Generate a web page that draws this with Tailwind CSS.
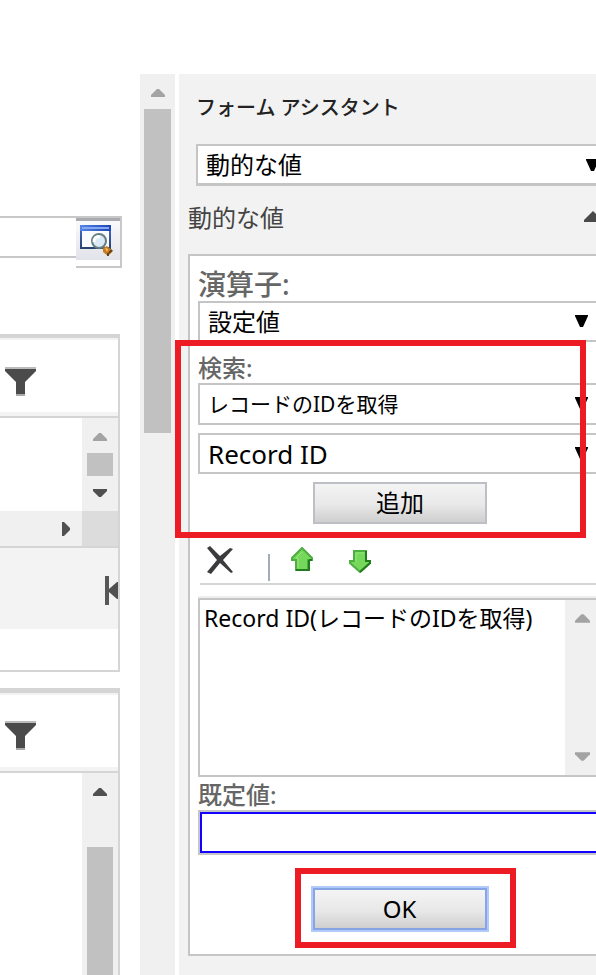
<!DOCTYPE html>
<html lang="ja">
<head>
<meta charset="utf-8">
<meta name="viewport" content="width=device-width, initial-scale=1">
<title>フォーム アシスタント</title>
<script src="https://cdn.jsdelivr.net/npm/@tailwindcss/browser@4"></script>
</head>
<body class="bg-white overflow-x-hidden font-['Noto_Sans','Noto_Sans_CJK_JP',sans-serif] text-black">
<svg class="hidden" aria-hidden="true">
  <symbol id="up" viewBox="0 0 14 8"><path d="M0 8V6L6 0H8L14 6V8Z" fill="currentColor"/></symbol>
  <symbol id="down" viewBox="0 0 14 8"><path d="M0 0V2L6 8H8L14 2V0Z" fill="currentColor"/></symbol>
  <symbol id="caret" viewBox="0 0 13 13"><path d="M0 0H13V1L8 12H5L0 1Z" fill="currentColor"/></symbol>
  <symbol id="funnel" viewBox="0 0 33 29"><path d="M1 2H32V4L21 15V28H12V15L1 4Z" fill="#4b4b4b"/><path d="M1 0H32V2H1Z" fill="#bcbcbc"/><path d="M12 27H21V29H12Z" fill="#aaa"/></symbol>
</svg>
<main class="flex min-h-screen">
  <section class="w-[140px] shrink-0 flex flex-col pt-[216px]" aria-label="レコード">
    <div class="flex items-start w-[122px]">
      <input type="text" aria-label="検索値" class="min-w-0 flex-1 h-[42px] border-y-2 border-[#c8c8c8] bg-white outline-none">
      <div class="w-[46px] h-[52px] border-y-2 border-r-2 border-[#c8c8c8]">
        <button type="button" aria-label="参照" class="block w-full h-[42px] border-t-3 border-[#a9abb1] bg-linear-to-b from-[#fafafb] to-[#e2e2ea] pl-1">
          <svg class="w-[34px] h-[32px]" viewBox="0 0 34 32" aria-hidden="true">
            <defs><linearGradient id="bar" x2="1"><stop stop-color="#5585e8"/><stop offset="1" stop-color="#1c45b4"/></linearGradient><linearGradient id="frame" y2="1" x2="0"><stop stop-color="#3f68c4"/><stop offset="1" stop-color="#29436f"/></linearGradient></defs>
            <path d="M1 5H30V23H1Z" fill="#fbfcff" stroke="url(#frame)" stroke-width="2"/>
            <path d="M0 0H31V6H0Z" fill="url(#bar)"/><path d="M2 2H29V4H2Z" fill="#84a8f4"/>
            <path d="M23 23L27 21L33 26L28 31L23 27Z" fill="#c77b20"/><path d="M25 23L28 24L27 27Z" fill="#ffc65e"/><path d="M29 28L32 25M28 31V28" stroke="#68401c" stroke-width="2"/>
            <circle cx="19" cy="16" r="7" fill="#dceaf6" stroke="#667d83" stroke-width="2"/><path d="M14 17Q14 11 20 12" fill="none" stroke="#fff" stroke-width="3"/>
          </svg>
        </button>
      </div>
    </div>

    <div class="mt-[66px] w-[120px] border-t-4 border-r-2 border-b-2 border-[#d5d5d5]">
      <div class="h-20 border-b-2 border-[#d5d5d5]">
        <div class="h-[78px] border-t-2 border-b-4 border-[#f3f3f3] pt-[27px] pl-1">
          <button type="button" aria-label="フィルター" class="block"><svg class="w-[33px] h-[29px]"><use href="#funnel"/></svg></button>
        </div>
      </div>
      <div class="flex justify-end h-[93px]">
        <div class="w-9 bg-[#f0f0f0] flex flex-col items-center pt-[15px]">
          <svg class="w-[14px] h-2 text-[#a3a3a3]"><use href="#up"/></svg>
          <div class="mt-3 w-[26px] h-[23px] bg-[#c1c1c1]"></div>
          <svg class="mt-[13px] w-[14px] h-2 text-[#505050]"><use href="#down"/></svg>
        </div>
      </div>
      <div class="flex h-[37px] border-b-2 border-[#d5d5d5]">
        <div class="flex-1 bg-[#f0f0f0] flex items-center justify-end pr-3">
          <svg class="w-2 h-[14px]" viewBox="0 0 8 14" aria-hidden="true"><path d="M0 0H2L8 6V8L2 14H0Z" fill="#505050"/></svg>
        </div>
        <div class="w-9 bg-[#dcdcdc]"></div>
      </div>
      <div class="h-[81px] bg-[#f3f3f3] flex items-center justify-end pt-1">
        <button type="button" aria-label="最初のページ"><svg class="block w-[13px] h-[29px]" viewBox="0 0 13 29"><path d="M0 0H4V29H0Z" fill="#575757"/><path d="M4 13L12 6H13V23H12L4 16Z" fill="#505050"/></svg></button>
      </div>
      <div class="h-[41px]"></div>
    </div>

    <div class="mt-4 w-[120px] flex-1 flex flex-col border-t-5 border-r-2 border-[#d5d5d5]">
      <div class="h-20 border-b-2 border-[#d5d5d5]">
        <div class="h-[78px] border-t-2 border-b-4 border-[#f3f3f3] pt-[26px] pl-1">
          <button type="button" aria-label="フィルター" class="block"><svg class="w-[33px] h-[29px]"><use href="#funnel"/></svg></button>
        </div>
      </div>
      <div class="flex-1 flex justify-end">
        <div class="w-9 bg-[#f0f0f0] flex flex-col items-center pt-[15px]">
          <svg class="w-[14px] h-2 shrink-0 text-[#505050]"><use href="#up"/></svg>
          <div class="mt-[51px] w-[26px] flex-1 bg-[#c1c1c1]"></div>
        </div>
      </div>
    </div>
  </section>

  <div class="mt-[74px] w-[35px] shrink-0 bg-[#f0f0f0] flex flex-col items-center pt-[15px]">
    <svg class="w-[14px] h-2 text-[#a3a3a3]"><use href="#up"/></svg>
    <div class="mt-3 w-[27px] h-[324px] bg-[#c1c1c1]"></div>
  </div>

  <aside class="mt-[74px] ml-1 flex-1 min-w-0 bg-[#f2f2f2] pb-5">
    <h1 class="pl-[17px] pt-[18px] h-[70px] text-[20px] leading-8 font-medium text-[#222]">フォーム アシスタント</h1>
    <div class="relative ml-[17px] overflow-hidden">
      <select aria-label="アシスタントの種類" class="block appearance-none w-full h-[42px] pl-2 bg-white border-2 border-b-3 border-r-0 border-[#c5c5c5] text-[24px] leading-8"><option>動的な値</option></select>
      <svg class="absolute -right-[3px] top-[15px] w-[13px] h-[13px] pointer-events-none"><use href="#caret"/></svg>
    </div>
    <div class="flex justify-between items-center h-[68px] pl-[9px] pb-1 overflow-hidden">
      <h2 class="text-[24px] leading-8 text-[#444]">動的な値</h2>
      <svg class="-mr-1.5 mb-1 w-[18px] h-[11px]" viewBox="0 0 18 11" aria-hidden="true"><path d="M0 11V9L9 0L18 9V11Z" fill="#4a4a4a"/></svg>
    </div>

    <form class="ml-[9px] bg-white border-2 border-r-0 border-[#c5c5c5] pl-2" onsubmit="return false">
      <label for="op" class="block h-[45px] pt-3 text-[28px] leading-8 font-medium text-[#666]">演算子:</label>
      <div class="relative">
        <select id="op" class="block appearance-none w-full h-[41px] pl-2 bg-white border-2 border-r-0 border-[#c5c5c5] text-[24px] leading-8"><option>設定値</option></select>
        <svg class="absolute right-2 top-[14px] w-[13px] h-[13px] pointer-events-none"><use href="#caret"/></svg>
      </div>

      <div class="relative">
        <label for="entity" class="block h-[41px] pt-2.5 text-[24px] leading-8 font-medium text-[#666]">検索:</label>
        <div class="relative">
          <select id="entity" class="block appearance-none w-full h-[42px] pl-2 bg-white border-2 border-r-0 border-[#c5c5c5] text-[21px] leading-8"><option>レコードのIDを取得</option></select>
          <svg class="absolute right-2 top-[14px] w-[13px] h-[13px] pointer-events-none"><use href="#caret"/></svg>
        </div>
        <div class="relative mt-2">
          <select aria-label="フィールド" class="block appearance-none w-full h-[41px] pl-2 bg-white border-2 border-r-0 border-[#c5c5c5] text-[26px] leading-8"><option>Record ID</option></select>
          <svg class="absolute right-2 top-[14px] w-[13px] h-[13px] pointer-events-none"><use href="#caret"/></svg>
        </div>
        <div class="flex justify-center pl-1.5 pt-2">
          <button type="button" class="w-[174px] h-[42px] border-2 border-[#bcc0c4] text-[24px] leading-8 bg-linear-to-b from-[#f4f4f4] from-0% via-[#e8e8e8] via-55% to-[#cfcfcf]">追加</button>
        </div>
        <div class="absolute -left-[23px] right-2.5 -top-0.5 -bottom-3.5 border-6 border-[#ed1c24] pointer-events-none"></div>
      </div>

      <div class="mt-[18px] h-[43px] ml-0.5 flex items-start border-b-2 border-[#d5d5d5]">
        <button type="button" aria-label="削除" class="ml-1.5 mt-1"><svg class="block w-[28px] h-[29px]" viewBox="0 0 28 29"><path d="M1 2L4 0L14 10L24 2L27 3L17 14L27 26L25 27L14 17L5 28L1 26L11 14Z" fill="#3b3b3e"/></svg></button>
        <span class="ml-[34px] mt-3 w-0.5 h-[27px] bg-[#a4abba]"></span>
        <button type="button" aria-label="上へ移動" class="ml-[21px] mt-[5px]"><svg class="block w-[22px] h-[24px]" viewBox="0 0 22 24"><path d="M11 1L21 11V13H17V23H5V13H1V11Z" fill="#75d85a" stroke="#4fae42" stroke-width="2"/><path d="M18 13V23H5M18 13H21" fill="none" stroke="#207c1c" stroke-width="2"/><path d="M7 21V11H5L11 5" fill="none" stroke="#96e67c" stroke-width="1"/></svg></button>
        <button type="button" aria-label="下へ移動" class="ml-9 mt-2"><svg class="block w-[22px] h-[23px]" viewBox="0 0 22 23"><path d="M5 1H17V11H21V13L11 22L1 13V11H5Z" fill="#75d85a" stroke="#4fae42" stroke-width="2"/><path d="M17 1V11H21V13L11 22" fill="none" stroke="#207c1c" stroke-width="2"/><path d="M7 12V3H15" fill="none" stroke="#96e67c" stroke-width="1"/></svg></button>
      </div>

      <div class="mt-[11px] border-t-2 border-[#eee]">
        <div class="flex h-[179px] border-2 border-r-0 border-[#c5c5c5]">
          <ul class="flex-1 min-w-0 pl-1 pt-0.5 text-[23px] leading-8 whitespace-nowrap overflow-hidden" aria-label="選択した値"><li>Record ID(レコードのIDを取得)</li></ul>
          <div class="w-[31px] shrink-0 bg-[#f0f0f0] flex flex-col items-end justify-between pt-[14px] pb-[14px] pr-1.5">
            <svg class="w-[15px] h-[9px] text-[#a3a3a3]"><use href="#up"/></svg>
            <svg class="w-[15px] h-[9px] text-[#a3a3a3]"><use href="#down"/></svg>
          </div>
        </div>
      </div>

      <label for="def" class="block h-[33px] pt-0.5 text-[24px] leading-8 font-medium text-[#666]">既定値:</label>
      <div class="border-2 border-r-0 border-[#c5c5c5]">
        <input id="def" type="text" class="block w-full h-[41px] px-2 border-2 border-r-0 border-[#1400ff] text-[24px] outline-none">
      </div>
      <div class="flex justify-center pl-4 pt-[13px] pb-1.5">
        <div class="border-6 border-[#ed1c24] pt-3 pb-2.5 pl-2.5 pr-[21px]">
          <button type="submit" class="block w-[178px] h-[46px] border-2 border-[#b0cbfb] text-[24px] leading-8">
            <span class="flex items-center justify-center h-full border-2 border-[#87a5e2] bg-linear-to-b from-[#f4f4f4] from-0% via-[#e8e8e8] via-55% to-[#cfcfcf]">OK</span>
          </button>
        </div>
      </div>
    </form>
  </aside>
</main>
</body>
</html>
